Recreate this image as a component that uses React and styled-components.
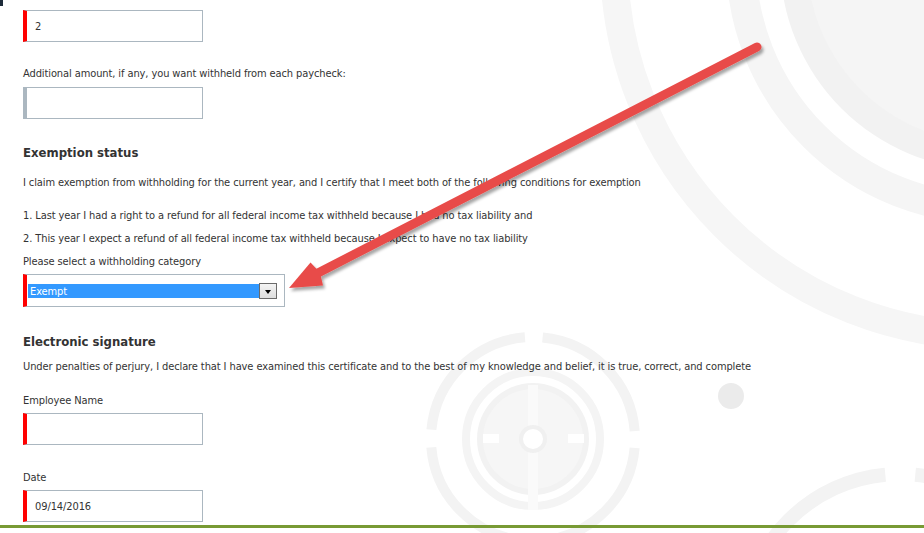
import React from "react";
import styled, { createGlobalStyle } from "styled-components";

const GlobalStyle = createGlobalStyle`
  html, body { margin: 0; padding: 0; background: #ffffff; }
  body {
    font-family: "DejaVu Sans Condensed", "DejaVu Sans", Tahoma, sans-serif;
    font-stretch: condensed;
    font-size: 11px;
    letter-spacing: -0.1px;
    color: #333333;
  }
  * { box-sizing: border-box; }
`;

const Page = styled.div`
  position: relative;
  width: 924px;
  height: 533px;
  overflow: hidden;
  display: flex;
  flex-direction: column;
`;

const Backdrop = styled.svg`
  position: absolute;
  left: 0;
  top: 0;
  z-index: 0;
  pointer-events: none;
`;

const ArrowLayer = styled.svg`
  position: absolute;
  left: 0;
  top: 0;
  z-index: 3;
  pointer-events: none;
`;

const CornerMark = styled.div`
  position: absolute;
  left: 0;
  top: 0;
  width: 3px;
  height: 6px;
  background: #1d2b3a;
  z-index: 2;
`;

const Form = styled.form`
  position: relative;
  z-index: 1;
  display: flex;
  flex-direction: column;
  align-items: flex-start;
  padding: 10px 0 0 23px;
`;

const Label = styled.label`
  display: block;
  line-height: 14px;
  padding-top: 1px;
  margin-top: ${(p) => p.$mt || 0}px;
`;

const Text = styled.p`
  margin: ${(p) => p.$mt || 0}px 0 0 0;
  padding-top: 1px;
  line-height: 14px;
  white-space: nowrap;
`;

const SectionTitle = styled.h2`
  margin: ${(p) => p.$mt || 0}px 0 0 0;
  padding-top: 1px;
  font-size: 13px;
  line-height: 18px;
  font-weight: bold;
  letter-spacing: 0;
  color: #333333;
`;

const TextInput = styled.input`
  display: block;
  width: 180px;
  height: 32px;
  margin-top: ${(p) => p.$mt || 0}px;
  padding: 0 0 0 8px;
  border: 1px solid #abb7c0;
  border-left: 4px solid ${(p) => (p.$required ? "#ff0000" : "#abb7c0")};
  background: #ffffff;
  font: inherit;
  font-stretch: condensed;
  letter-spacing: inherit;
  color: #333333;
  outline: none;
`;

const SelectFrame = styled.div`
  width: 262px;
  height: 33px;
  margin-top: ${(p) => p.$mt || 0}px;
  padding-top: 8px;
  border: 1px solid #abb7c0;
  border-left: 4px solid #ff0000;
  background: #ffffff;
`;

const SelectControl = styled.div`
  display: flex;
  width: 250px;
  height: 16px;
`;

const SelectedValue = styled.span`
  flex: 1;
  margin: 1px 0 1px 1px;
  padding-left: 2px;
  background: #3399ff;
  color: #ffffff;
  line-height: 15px;
`;

const DropButton = styled.span`
  width: 18px;
  display: flex;
  align-items: center;
  justify-content: center;
  border: 1px solid #6b6b6b;
  background: linear-gradient(#f4f4f4, #dedede);
`;

const Caret = styled.span`
  width: 0;
  height: 0;
  border-left: 3.5px solid transparent;
  border-right: 3.5px solid transparent;
  border-top: 4px solid #000000;
  margin-top: 1px;
`;

const Footer = styled.div`
  position: relative;
  z-index: 1;
  margin-top: 3px;
  height: 3px;
  width: 100%;
  background: #789a34;
`;

function Decorations() {
  const c1 = 2 * Math.PI * 102;
  const q1 = c1 / 4;
  const c2 = 2 * Math.PI * 157;
  const q2 = c2 / 4;
  return (
    <Backdrop width="924" height="533" viewBox="0 0 924 533">
      {/* large rings top right */}
      <circle cx="990" cy="-40" r="376" fill="none" stroke="#f6f6f6" strokeWidth="28" />
      <circle cx="990" cy="-40" r="249" fill="none" stroke="#f5f5f5" strokeWidth="30" />
      <circle cx="990" cy="-40" r="210" fill="#f2f2f2" />
      <circle cx="990" cy="-40" r="183" fill="#f5f5f5" />

      {/* compass */}
      <circle
        cx="533"
        cy="439"
        r="102"
        fill="none"
        stroke="#f3f3f3"
        strokeWidth="10"
        strokeDasharray={`${q1 - 18} 18`}
        strokeDashoffset="-9"
      />
      <circle cx="533" cy="439" r="67" fill="none" stroke="#f4f4f4" strokeWidth="8" />
      <circle cx="533" cy="439" r="56" fill="#f2f2f2" />
      <circle cx="533" cy="439" r="50" fill="#f6f6f6" />
      <rect x="528" y="385" width="10" height="125" fill="#fafafa" />
      <rect x="483" y="434" width="16" height="9" fill="#ffffff" />
      <rect x="568" y="434" width="16" height="9" fill="#ffffff" />
      <circle cx="533" cy="439" r="14" fill="#f0f0f0" />
      <circle cx="533" cy="439" r="10" fill="#ffffff" />

      <circle cx="731" cy="396" r="13" fill="#ebebeb" />

      <circle
        cx="900"
        cy="631"
        r="157"
        fill="none"
        stroke="#f3f3f3"
        strokeWidth="14"
        strokeDasharray={`${q2 - 30} 30`}
        strokeDashoffset="-15"
      />
    </Backdrop>
  );
}

function Arrow() {
  return (
    <ArrowLayer width="924" height="533" viewBox="0 0 924 533">
      <defs>
        <filter id="arrowShadow" x="-10%" y="-10%" width="130%" height="130%">
          <feDropShadow dx="2" dy="3" stdDeviation="1.5" floodColor="#000000" floodOpacity="0.35" />
        </filter>
      </defs>
      <g filter="url(#arrowShadow)">
        <line x1="757" y1="47" x2="316" y2="274" stroke="#e84c49" strokeWidth="9" strokeLinecap="round" />
        <polygon points="289,288 310.5,262.5 320,272.5 323,285.5" fill="#e84c49" />
      </g>
    </ArrowLayer>
  );
}

export default function App() {
  return (
    <>
      <GlobalStyle />
      <Page>
        <Decorations />
        <CornerMark />
        <Form onSubmit={(e) => e.preventDefault()}>
          <TextInput $required readOnly defaultValue="2" />
          <Label $mt={24}>Additional amount, if any, you want withheld from each paycheck:</Label>
          <TextInput $mt={6} readOnly defaultValue="" />

          <SectionTitle $mt={24}>Exemption status</SectionTitle>
          <Text $mt={13}>
            I claim exemption from withholding for the current year, and I certify that I meet both of the following conditions for exemption
          </Text>
          <Text $mt={18}>
            1. Last year I had a right to a refund for all federal income tax withheld because I had no tax liability and
          </Text>
          <Text $mt={8}>
            2. This year I expect a refund of all federal income tax withheld because I expect to have no tax liability
          </Text>
          <Text $mt={8}>Please select a withholding category</Text>
          <SelectFrame $mt={5}>
            <SelectControl>
              <SelectedValue>Exempt</SelectedValue>
              <DropButton>
                <Caret />
              </DropButton>
            </SelectControl>
          </SelectFrame>

          <SectionTitle $mt={25}>Electronic signature</SectionTitle>
          <Text $mt={8}>
            Under penalties of perjury, I declare that I have examined this certificate and to the best of my knowledge and belief, it is true, correct, and complete
          </Text>

          <Label $mt={19}>Employee Name</Label>
          <TextInput $mt={5} $required readOnly defaultValue="" />

          <Label $mt={25}>Date</Label>
          <TextInput $mt={5} $required readOnly defaultValue="09/14/2016" />
        </Form>
        <Footer />
        <Arrow />
      </Page>
    </>
  );
}
